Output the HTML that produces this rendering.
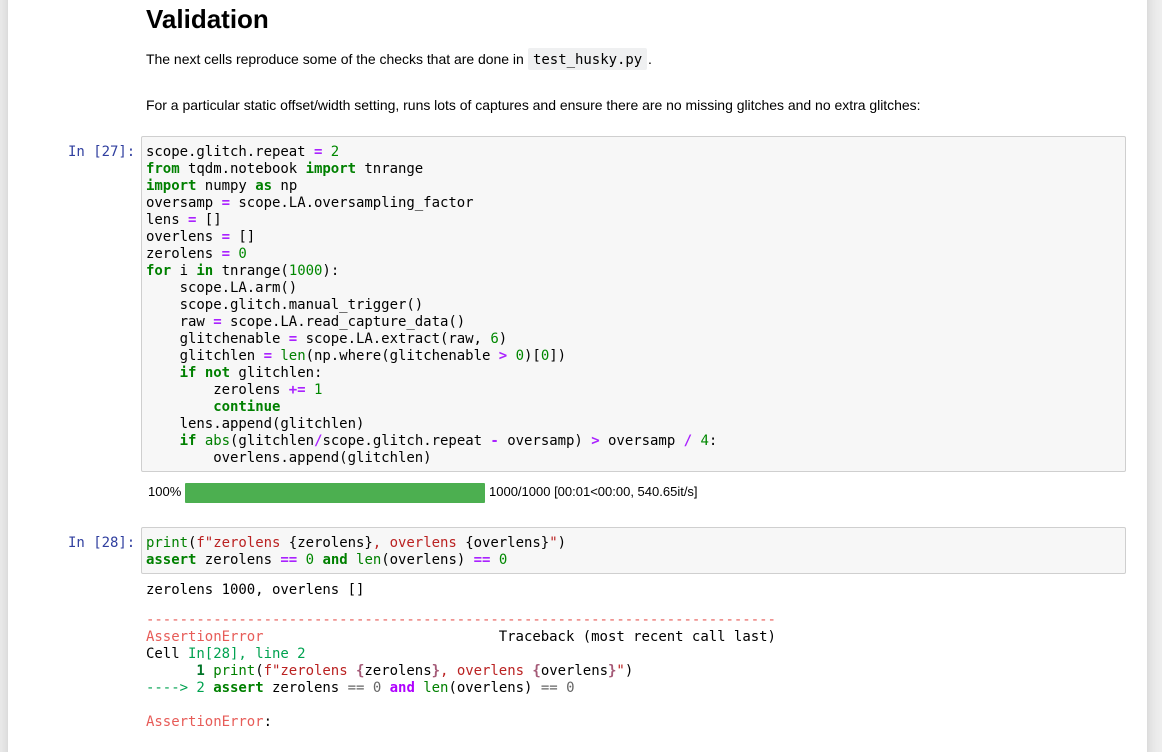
<!DOCTYPE html>
<html><head><meta charset="utf-8">
<style>
html,body{margin:0;padding:0;width:1162px;height:752px;overflow:hidden;background:#eee}
#wrap{position:absolute;left:0;top:0;width:1162px;height:752px;overflow:hidden}
#page{position:absolute;left:8px;top:-20px;width:1139px;height:790px;background:#fff;box-shadow:0 0 12px 1px rgba(87,87,87,.2)}
.a{position:absolute;white-space:pre}
.s{font-family:"Liberation Sans",sans-serif;color:#000;letter-spacing:-.02px}
.m{font-family:"DejaVu Sans Mono",monospace;font-size:14px;line-height:17px;color:#000;white-space:pre;letter-spacing:-.03px}
.box{position:absolute;background:#f7f7f7;border:1px solid #cfcfcf;border-radius:2px;box-sizing:border-box}
.k{color:#008000;font-weight:bold}
.o{color:#aa22ff;font-weight:bold}
.n{color:#008800}
.b{color:#008000}
.t{color:#ba2121}
.p{color:#303f9f}
.r{color:#e75c58}
.g{color:#00a250}
.d{color:#007427;font-weight:bold}
.i{color:#a45a77;font-weight:bold}
.w{color:#af00ff;font-weight:bold}
.y{color:#666}
</style></head><body>
<div id="wrap">
<div id="page"></div>

<div class="a s" style="left:146px;top:3px;font-size:26px;line-height:32px;font-weight:bold;letter-spacing:0">Validation</div>

<div class="a s" style="left:146px;top:49px;font-size:14px;line-height:20px">The next cells reproduce some of the checks that are done in</div>
<div class="a" style="left:528px;top:48px;width:119px;height:22px;background:#eff0f1;border-radius:2px"></div>
<div class="a m" style="left:533px;top:52px">test_husky.py</div>
<div class="a s" style="left:648px;top:49px;font-size:14px;line-height:20px">.</div>

<div class="a s" style="left:146px;top:95px;font-size:14px;line-height:20px">For a particular static offset/width setting, runs lots of captures and ensure there are no missing glitches and no extra glitches:</div>

<div class="a m p" style="left:68px;top:144px">In [27]:</div>
<div class="box" style="left:141px;top:136px;width:985px;height:336px"></div>
<div class="a m" style="left:146px;top:144px">scope.glitch.repeat <span class="o">=</span> <span class="n">2</span>
<span class="k">from</span> tqdm.notebook <span class="k">import</span> tnrange
<span class="k">import</span> numpy <span class="k">as</span> np
oversamp <span class="o">=</span> scope.LA.oversampling_factor
lens <span class="o">=</span> []
overlens <span class="o">=</span> []
zerolens <span class="o">=</span> <span class="n">0</span>
<span class="k">for</span> i <span class="k">in</span> tnrange(<span class="n">1000</span>):
    scope.LA.arm()
    scope.glitch.manual_trigger()
    raw <span class="o">=</span> scope.LA.read_capture_data()
    glitchenable <span class="o">=</span> scope.LA.extract(raw, <span class="n">6</span>)
    glitchlen <span class="o">=</span> <span class="b">len</span>(np.where(glitchenable <span class="o">&gt;</span> <span class="n">0</span>)[<span class="n">0</span>])
    <span class="k">if</span> <span class="k">not</span> glitchlen:
        zerolens <span class="o">+=</span> <span class="n">1</span>
        <span class="k">continue</span>
    lens.append(glitchlen)
    <span class="k">if</span> <span class="b">abs</span>(glitchlen<span class="o">/</span>scope.glitch.repeat <span class="o">-</span> oversamp) <span class="o">&gt;</span> oversamp <span class="o">/</span> <span class="n">4</span>:
        overlens.append(glitchlen)</div>

<div class="a s" style="left:148px;top:482px;font-size:13px;line-height:20px;letter-spacing:0">100%</div>
<div class="a" style="left:185px;top:483px;width:300px;height:20px;background:#4caf50;border-radius:1px"></div>
<div class="a s" style="left:489px;top:482px;font-size:13px;line-height:20px;letter-spacing:0">1000/1000 [00:01&lt;00:00, 540.65it/s]</div>

<div class="a m p" style="left:68px;top:535px">In [28]:</div>
<div class="box" style="left:141px;top:527px;width:985px;height:47px"></div>
<div class="a m" style="left:146px;top:535px"><span class="b">print</span>(<span class="t">f"zerolens </span>{zerolens}<span class="t">, overlens </span>{overlens}<span class="t">"</span>)
<span class="k">assert</span> zerolens <span class="o">==</span> <span class="n">0</span> <span class="k">and</span> <span class="b">len</span>(overlens) <span class="o">==</span> <span class="n">0</span></div>

<div class="a m" style="left:146px;top:582px">zerolens 1000, overlens []</div>

<div class="a m" style="left:146px;top:612px"><span class="r">---------------------------------------------------------------------------</span>
<span class="r">AssertionError</span>                            Traceback (most recent call last)
Cell <span class="g">In[28], line 2</span>
<span class="d">      1</span> <span class="b">print</span>(<span class="t">f"zerolens </span><span class="i">{</span>zerolens<span class="i">}</span><span class="t">, overlens </span><span class="i">{</span>overlens<span class="i">}</span><span class="t">"</span>)
<span class="g">----&gt; 2</span> <span class="k">assert</span> zerolens <span class="y">==</span> <span class="y">0</span> <span class="w">and</span> <span class="b">len</span>(overlens) <span class="y">==</span> <span class="y">0</span>

<span class="r">AssertionError</span>:</div>
</div>
</body></html>
